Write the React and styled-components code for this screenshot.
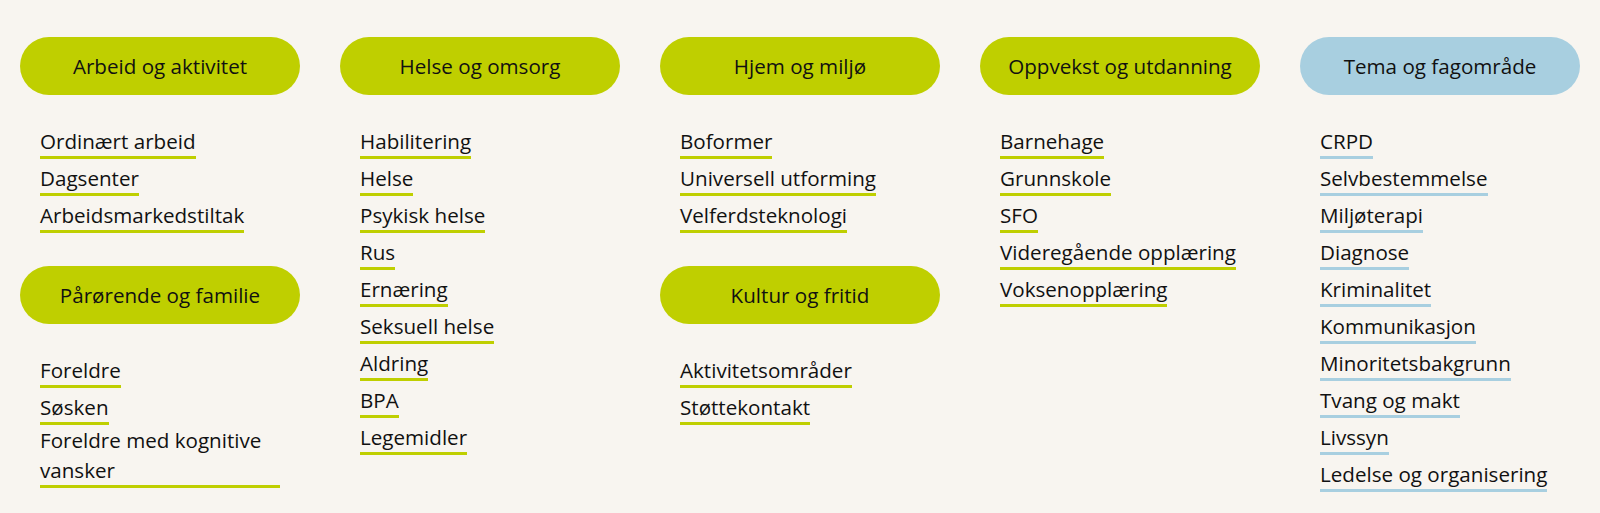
import React from "react";
import styled, { createGlobalStyle } from "styled-components";

const GlobalStyle = createGlobalStyle`
  html, body {
    margin: 0;
    padding: 0;
    background: #f8f5f0;
  }
  body {
    font-family: "Open Sans", "Noto Sans", sans-serif;
    color: #111111;
  }
  * { box-sizing: border-box; }
`;

const Page = styled.div`
  display: grid;
  grid-template-columns: repeat(5, 280px);
  column-gap: 40px;
  padding: 37px 20px 0;
  min-height: 513px;
`;

const Column = styled.div`
  display: flex;
  flex-direction: column;
`;

const Group = styled.section`
  display: flex;
  flex-direction: column;
  & + & {
    margin-top: 33px;
  }
`;

const Pill = styled.h2`
  margin: 0;
  height: 58px;
  border-radius: 29px;
  background: ${(p) => (p.$tone === "blue" ? "#a8cfe0" : "#bfcf00")};
  display: flex;
  align-items: center;
  justify-content: center;
  font-size: 20.6px;
  font-weight: 400;
  color: #111111;
`;

const List = styled.ul`
  list-style: none;
  margin: 27px 0 0;
  padding: 0 20px;
`;

const Item = styled.li`
  font-size: 22px;
  line-height: 36.3px;
`;

const Link = styled.a`
  display: inline-block;
  font-size: 20.6px;
  line-height: 30px;
  color: #111111;
  text-decoration: none;
  border-bottom: 3px solid ${(p) => (p.$tone === "blue" ? "#a8cfe0" : "#bfcf00")};
`;

const columns = [
  [
    {
      title: "Arbeid og aktivitet",
      items: ["Ordinært arbeid", "Dagsenter", "Arbeidsmarkedstiltak"],
    },
    {
      title: "Pårørende og familie",
      items: ["Foreldre", "Søsken", "Foreldre med kognitive vansker"],
    },
  ],
  [
    {
      title: "Helse og omsorg",
      items: [
        "Habilitering",
        "Helse",
        "Psykisk helse",
        "Rus",
        "Ernæring",
        "Seksuell helse",
        "Aldring",
        "BPA",
        "Legemidler",
      ],
    },
  ],
  [
    {
      title: "Hjem og miljø",
      items: ["Boformer", "Universell utforming", "Velferdsteknologi"],
    },
    {
      title: "Kultur og fritid",
      items: ["Aktivitetsområder", "Støttekontakt"],
    },
  ],
  [
    {
      title: "Oppvekst og utdanning",
      items: [
        "Barnehage",
        "Grunnskole",
        "SFO",
        "Videregående opplæring",
        "Voksenopplæring",
      ],
    },
  ],
  [
    {
      title: "Tema og fagområde",
      tone: "blue",
      items: [
        "CRPD",
        "Selvbestemmelse",
        "Miljøterapi",
        "Diagnose",
        "Kriminalitet",
        "Kommunikasjon",
        "Minoritetsbakgrunn",
        "Tvang og makt",
        "Livssyn",
        "Ledelse og organisering",
      ],
    },
  ],
];

export default function App() {
  return (
    <>
      <GlobalStyle />
      <Page>
        {columns.map((groups, ci) => (
          <Column key={ci}>
            {groups.map((g) => (
              <Group key={g.title}>
                <Pill $tone={g.tone}>{g.title}</Pill>
                <List>
                  {g.items.map((it) => (
                    <Item key={it}>
                      <Link href="#" $tone={g.tone}>
                        {it}
                      </Link>
                    </Item>
                  ))}
                </List>
              </Group>
            ))}
          </Column>
        ))}
      </Page>
    </>
  );
}
